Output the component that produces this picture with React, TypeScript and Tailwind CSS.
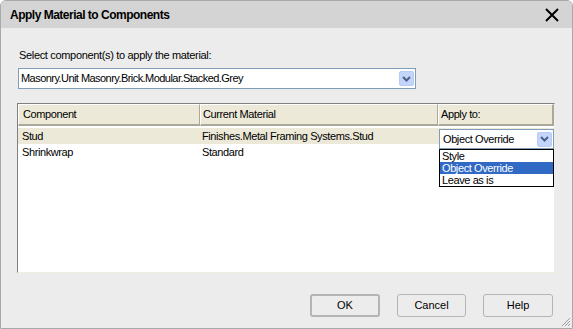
import React from 'react';

const rows = [
    { name: 'Stud', material: 'Finishes.Metal Framing Systems.Stud', active: true },
    { name: 'Shrinkwrap', material: 'Standard', active: false },
];

const options = ['Style', 'Object Override', 'Leave as is'];

const ArrowButton: React.FC = () => (
    <div className="w-[15px] h-[15px] rounded-[2px] border border-[#b9cbf3] bg-[#c4d5fb] flex items-center justify-center">
        <svg width="9" height="6" viewBox="0 0 9 6">
            <path d="M1 1 L4.5 4.5 L8 1" fill="none" stroke="#4d6185" strokeWidth="2" />
        </svg>
    </div>
);

const App: React.FC = () => {
    return (
        <div
            className="relative w-[573px] h-[329px] bg-[#ececec] border border-[#a9a9a9] rounded-t-[6px] overflow-hidden flex flex-col text-black"
            style={{ fontFamily: '"Liberation Sans", Arial, sans-serif' }}
        >
            {/* Title bar */}
            <div className="h-[27px] shrink-0 bg-[#d4d4d4] flex items-center justify-between pl-[9px] pr-[13px]">
                <span className="text-[12px] font-bold leading-none tracking-[-0.5px]">Apply Material to Components</span>
                <svg width="14" height="14" viewBox="0 0 14 14">
                    <path d="M1 1 L13 13 M13 1 L1 13" stroke="#000" strokeWidth="2" />
                </svg>
            </div>

            {/* Body */}
            <div className="flex-1 flex flex-col px-[16px] pt-[21px] text-[11px] tracking-[-0.33px]">
                <div className="leading-[13px] pl-[2px]">Select component(s) to apply the material:</div>

                <div className="mt-[6px] ml-[1px] w-[398px] h-[21px] bg-white border border-[#7f9db9] flex items-center justify-between pl-[2px] pr-[1px]">
                    <span className="tracking-[-0.55px]">Masonry.Unit Masonry.Brick.Modular.Stacked.Grey</span>
                    <ArrowButton />
                </div>

                {/* Table */}
                <div className="mt-[14px] w-[538px] h-[170px] bg-white border-t border-l border-[#808080] border-b border-r border-b-[#f1efe2] border-r-[#f1efe2] flex flex-col tracking-[-0.4px]">
                    <div className="flex h-[22px] shrink-0">
                        <div className="w-[182px] bg-[#ece9d8] border-t border-l border-white border-b-2 border-r border-b-[#aca899] border-r-[#aca899] flex items-center pl-[4px]">
                            Component
                        </div>
                        <div className="w-[238px] bg-[#ece9d8] border-t border-l border-white border-b-2 border-r border-b-[#aca899] border-r-[#aca899] flex items-center pl-[2px]">
                            Current Material
                        </div>
                        <div className="w-[116px] bg-[#ece9d8] border-t border-l border-white border-b-2 border-r-2 border-b-[#aca899] border-r-[#aca899] flex items-center pl-[2px]">
                            Apply to:
                        </div>
                    </div>
                    <div className="pt-[2px] flex flex-col">
                        {rows.map((r) => (
                            <div key={r.name} className={`flex h-[16px] items-center ${r.active ? 'bg-[#ece9d8]' : ''}`}>
                                <div className="w-[182px] pl-[4px]">{r.name}</div>
                                <div className="w-[238px] pl-[2px]">{r.material}</div>
                                <div className="w-[116px] relative self-stretch">
                                    {r.active && (
                                        <div className="absolute left-[1px] top-[1px] w-[115px] z-10">
                                            <div className="h-[20px] bg-white border border-[#7f9db9] flex items-center justify-between pl-[3px] pr-[1px]">
                                                <span>Object Override</span>
                                                <ArrowButton />
                                            </div>
                                            <div className="bg-white border border-black">
                                                {options.map((o) => (
                                                    <div
                                                        key={o}
                                                        className={`h-[12px] leading-[12px] pl-[2px] ${o === 'Object Override' ? 'bg-[#316ac5] text-white' : ''}`}
                                                    >
                                                        {o}
                                                    </div>
                                                ))}
                                            </div>
                                        </div>
                                    )}
                                </div>
                            </div>
                        ))}
                    </div>
                </div>

                {/* Buttons */}
                <div className="mt-[21px] flex justify-end gap-[17px] pr-[3px] tracking-normal">
                    <button className="w-[70px] h-[23px] rounded-[3px] border-2 border-[#b4b4b4] bg-[#ececec]">OK</button>
                    <button className="w-[69px] h-[23px] rounded-[3px] border border-[#b4b4b4] bg-[#ececec]">Cancel</button>
                    <button className="w-[70px] h-[23px] rounded-[3px] border border-[#b4b4b4] bg-[#ececec]">Help</button>
                </div>
            </div>

            {/* Resize grip */}
            <svg className="absolute right-[1px] bottom-[1px]" width="10" height="10" viewBox="0 0 10 10">
                <path d="M9 1 L1 9 M9 4 L4 9 M9 7 L7 9" stroke="#a0a0a0" strokeWidth="1" />
            </svg>
        </div>
    );
};

export default App;
